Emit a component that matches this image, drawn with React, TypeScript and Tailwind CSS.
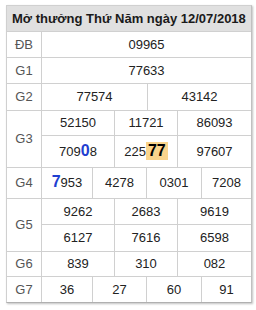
import type { ReactNode } from 'react';

const line = 'border-[#d0d0d0]';

function Cell({ w, children }: { w: string; children: ReactNode }) {
  return (
    <div className={`${w} flex items-center justify-center border-r ${line} last:border-r-0`}>
      {children}
    </div>
  );
}

function Sub({ h, children, bottom }: { h: string; children: ReactNode; bottom?: boolean }) {
  return <div className={`flex ${h} ${bottom ? `border-b ${line}` : ''}`}>{children}</div>;
}

function Prize({ label, children, last }: { label: string; children: ReactNode; last?: boolean }) {
  return (
    <div className={`flex ${last ? '' : `border-b ${line}`}`}>
      <div className={`w-[35px] shrink-0 flex items-center justify-center border-r ${line} text-[#555]`}>
        {label}
      </div>
      <div className="flex-1 flex flex-col">{children}</div>
    </div>
  );
}

const Blue = ({ children }: { children: ReactNode }) => (
  <span className="text-[16px] font-bold text-[#1f3fd1] leading-none">{children}</span>
);

export default function App() {
  const two = ['w-[106px]', 'flex-1'];
  const three = ['w-[73px]', 'w-[63px]', 'flex-1'];
  const four = ['w-[51px]', 'w-[54px]', 'w-[55px]', 'flex-1'];

  return (
    <div className="bg-white w-[256px] h-[310px] pl-[6px] pt-[5px]" style={{ fontFamily: '"Liberation Sans", Arial, sans-serif' }}>
      <div className={`w-[246px] border ${line} border-b-[#b0b0b0] border-r-[#c0c0c0] shadow-[1px_1px_2px_rgba(0,0,0,0.25)] text-[13px] text-[#222]`}>
        <div className={`h-[26px] bg-[#e0e0e0] border-b ${line} flex items-center pl-[5px] font-bold text-[#1a1a1a]`}>
          Mở thưởng Thứ Năm ngày 12/07/2018
        </div>

        <Prize label="ĐB">
          <Sub h="h-[25px]">
            <Cell w="flex-1">09965</Cell>
          </Sub>
        </Prize>
        <Prize label="G1">
          <Sub h="h-[25px]">
            <Cell w="flex-1">77633</Cell>
          </Sub>
        </Prize>
        <Prize label="G2">
          <Sub h="h-[26px]">
            <Cell w={two[0]}>77574</Cell>
            <Cell w={two[1]}>43142</Cell>
          </Sub>
        </Prize>
        <Prize label="G3">
          <Sub h="h-[25px]" bottom>
            <Cell w={three[0]}>52150</Cell>
            <Cell w={three[1]}>11721</Cell>
            <Cell w={three[2]}>86093</Cell>
          </Sub>
          <Sub h="h-[31px]">
            <Cell w={three[0]}>
              <span>
                709<Blue>0</Blue>8
              </span>
            </Cell>
            <Cell w={three[1]}>
              <span>
                225
                <span className="inline-block bg-[#f9d48c] px-[2px] py-[1px] text-[16px] font-bold leading-none text-black">
                  77
                </span>
              </span>
            </Cell>
            <Cell w={three[2]}>97607</Cell>
          </Sub>
        </Prize>
        <Prize label="G4">
          <Sub h="h-[30px]">
            <Cell w={four[0]}>
              <span>
                <Blue>7</Blue>953
              </span>
            </Cell>
            <Cell w={four[1]}>4278</Cell>
            <Cell w={four[2]}>0301</Cell>
            <Cell w={four[3]}>7208</Cell>
          </Sub>
        </Prize>
        <Prize label="G5">
          <Sub h="h-[26px]" bottom>
            <Cell w={three[0]}>9262</Cell>
            <Cell w={three[1]}>2683</Cell>
            <Cell w={three[2]}>9619</Cell>
          </Sub>
          <Sub h="h-[26px]">
            <Cell w={three[0]}>6127</Cell>
            <Cell w={three[1]}>7616</Cell>
            <Cell w={three[2]}>6598</Cell>
          </Sub>
        </Prize>
        <Prize label="G6">
          <Sub h="h-[24px]">
            <Cell w={three[0]}>839</Cell>
            <Cell w={three[1]}>310</Cell>
            <Cell w={three[2]}>082</Cell>
          </Sub>
        </Prize>
        <Prize label="G7" last>
          <Sub h="h-[25px]">
            <Cell w={four[0]}>36</Cell>
            <Cell w={four[1]}>27</Cell>
            <Cell w={four[2]}>60</Cell>
            <Cell w={four[3]}>91</Cell>
          </Sub>
        </Prize>
      </div>
    </div>
  );
}
